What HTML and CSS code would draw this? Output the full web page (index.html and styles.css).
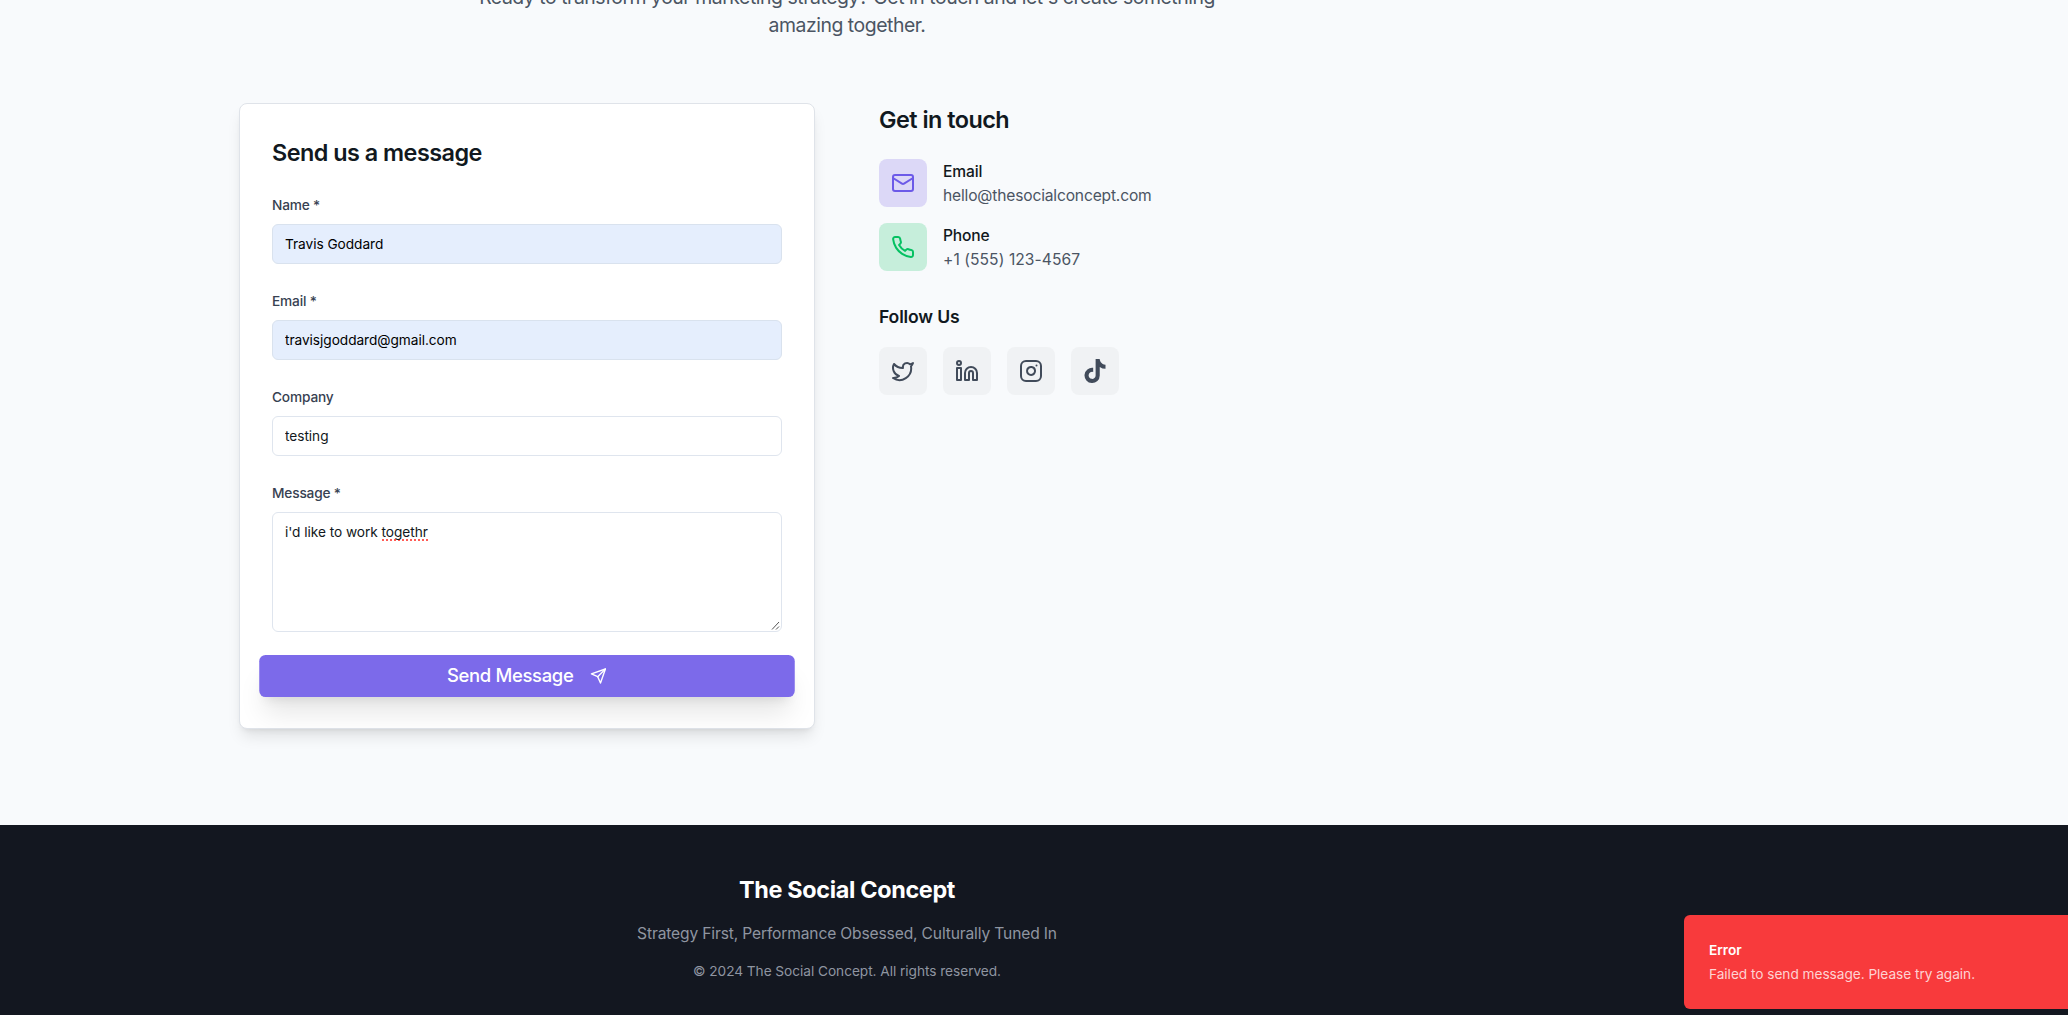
FILE: index.html
```html
<!DOCTYPE html>
<html lang="en">
<head>
<meta charset="utf-8">
<title>The Social Concept</title>
<link rel="stylesheet" href="styles.css">
</head>
<body>
<main class="contact">
  <p class="lead">Ready to transform your marketing strategy? Get in touch and let's create something<br>amazing together.</p>
  <div class="columns">
    <section class="card">
      <h2 class="heading">Send us a message</h2>
      <form class="form">
        <div class="field"><label class="label" for="name">Name *</label><input class="input autofill" id="name" value="Travis Goddard"></div>
        <div class="field"><label class="label" for="email">Email *</label><input class="input autofill" id="email" value="travisjgoddard@gmail.com"></div>
        <div class="field"><label class="label" for="company">Company</label><input class="input" id="company" value="testing"></div>
        <div class="field"><span class="label">Message *</span>
          <div class="input textarea" role="textbox">i'd like to work <span class="misspelled">togethr</span>
            <svg class="grip" viewBox="0 0 9 9"><path d="M1 8.5 8 1M5 8.5 8 5.5"/></svg>
          </div>
        </div>
        <button class="send" type="button"><span>Send Message</span>
          <svg class="icon send-icon" viewBox="0 0 24 24"><path d="m22 2-7 20-4-9-9-4Z"/><path d="M22 2 11 13"/></svg>
        </button>
      </form>
    </section>
    <section>
      <h2 class="heading">Get in touch</h2>
      <div class="methods">
        <div class="method">
          <span class="tile purple"><svg class="icon" viewBox="0 0 24 24"><rect x="2" y="4" width="20" height="16" rx="2"/><path d="m22 7-8.97 5.7a1.94 1.94 0 0 1-2.06 0L2 7"/></svg></span>
          <div class="method-text"><div class="method-name">Email</div><div class="method-value">hello@thesocialconcept.com</div></div>
        </div>
        <div class="method">
          <span class="tile green"><svg class="icon" viewBox="0 0 24 24"><path d="M22 16.92v3a2 2 0 0 1-2.18 2 19.79 19.79 0 0 1-8.63-3.07 19.5 19.5 0 0 1-6-6 19.79 19.79 0 0 1-3.07-8.67A2 2 0 0 1 4.11 2h3a2 2 0 0 1 2 1.72 12.84 12.84 0 0 0 .7 2.81 2 2 0 0 1-.45 2.11L8.09 9.91a16 16 0 0 0 6 6l1.27-1.27a2 2 0 0 1 2.11-.45 12.84 12.84 0 0 0 2.81.7A2 2 0 0 1 22 16.92z"/></svg></span>
          <div class="method-text"><div class="method-name">Phone</div><div class="method-value phone">+1 (555) 123-4567</div></div>
        </div>
      </div>
      <h3 class="follow">Follow Us</h3>
      <div class="socials">
        <a class="tile"><svg class="icon" viewBox="0 0 24 24"><path d="M22 4s-.7 2.1-2 3.4c1.6 10-9.4 17.3-18 11.6 2.2.1 4.4-.6 6-2C3 15.5.5 9.6 3 5c2.2 2.6 5.6 4.1 9 4-.9-4.2 4-6.6 7-3.8 1.1 0 3-1.2 3-1.2z"/></svg></a>
        <a class="tile"><svg class="icon" viewBox="0 0 24 24"><path d="M16 8a6 6 0 0 1 6 6v7h-4v-7a2 2 0 0 0-4 0v7h-4v-7a6 6 0 0 1 6-6z"/><rect x="2" y="9" width="4" height="12"/><circle cx="4" cy="4" r="2"/></svg></a>
        <a class="tile"><svg class="icon" viewBox="0 0 24 24"><rect x="2" y="2" width="20" height="20" rx="5"/><path d="M16 11.37A4 4 0 1 1 12.63 8 4 4 0 0 1 16 11.37z"/><path d="M17.5 6.5h.01"/></svg></a>
        <a class="tile"><svg class="icon solid" viewBox="0 0 448 512"><path d="M448,209.91a210.06,210.06,0,0,1-122.77-39.25V349.38A162.55,162.55,0,1,1,185,188.31V278.2a74.62,74.62,0,1,0,52.23,71.18V0l88,0a121.18,121.18,0,0,0,1.86,22.17h0A122.18,122.18,0,0,0,381,102.39a121.43,121.43,0,0,0,67,20.14Z"/></svg></a>
      </div>
    </section>
  </div>
</main>
<footer class="footer">
  <h2 class="brand">The Social Concept</h2>
  <p class="tagline">Strategy First, Performance Obsessed, Culturally Tuned In</p>
  <p class="copyright">© 2024 The Social Concept. All rights reserved.</p>
</footer>
<div class="toast" role="alert">
  <div class="toast-title">Error</div>
  <div class="toast-text">Failed to send message. Please try again.</div>
</div>
</body>
</html>
```
FILE: styles.css
```css
* { box-sizing: border-box; margin: 0; padding: 0; }
html { height: 100%; overflow: hidden; }
body {
  position: relative;
  height: 1015px;
  overflow: hidden;
  background: #f8fafc;
  color: #111820;
  font: 15.6px/24px Inter, "Liberation Sans", sans-serif;
}
.contact { display: flow-root; width: 1216px; margin-left: 239px; height: 825px; }
.lead {
  margin: -17px 0 64px;
  text-align: center;
  font-size: 19.4px;
  line-height: 28px;
  letter-spacing: -.455px;
  color: #4b5563;
}
.columns { display: grid; grid-template-columns: 1fr 1fr; gap: 64px; align-items: start; }
.card {
  padding: 32px;
  border: 1px solid #dfe3e9;
  border-radius: 8px;
  background: #fff;
  box-shadow: 0 10px 15px -3px rgba(0,0,0,.1), 0 4px 6px -4px rgba(0,0,0,.1);
}
.heading { padding-top: 1px; margin-bottom: 23px; font-size: 23.4px; line-height: 32px; font-weight: 600; letter-spacing: -.52px; }
.form { display: flex; flex-direction: column; gap: 24px; }
.label { display: block; padding-top: 1px; margin-bottom: 7px; font-size: 13.7px; line-height: 24px; font-weight: 470; letter-spacing: -.17px; color: #374151; }
.input {
  display: block;
  width: 100%;
  height: 40px;
  padding: 8px 12px;
  border: 1px solid #dfe5ee;
  border-radius: 6px;
  background: #fff;
  color: #111820;
  font: 13.7px/20px Inter, "Liberation Sans", sans-serif;
  letter-spacing: -.05px;
}
.autofill { background: #e5eefd; border-color: #d9e2ee; color: #000; }
.textarea { position: relative; height: 120px; padding-top: 9px; }
.misspelled {
  padding-bottom: 1px;
  background: repeating-linear-gradient(90deg, #ff5b55 0 2px, transparent 2px 4px) 0 100% / 100% 2px no-repeat;
}
.grip { position: absolute; right: 1px; bottom: 1px; width: 9px; height: 9px; fill: none; stroke: #555; stroke-width: 1; }
.send {
  display: flex;
  align-items: center;
  justify-content: center;
  gap: 16px;
  height: 40px;
  margin: 0;
  border: 0;
  border-radius: 6px;
  background: #7c6aea;
  color: #fff;
  font: 450 17.6px/28px Inter, "Liberation Sans", sans-serif;
  letter-spacing: -.32px;
  transform: scale(1.05);
  box-shadow: 0 20px 25px -5px rgba(0,0,0,.1), 0 8px 10px -6px rgba(0,0,0,.1);
}
.icon { display: block; width: 24px; height: 24px; fill: none; stroke: currentColor; stroke-width: 2; stroke-linecap: round; stroke-linejoin: round; }
.solid { fill: currentColor; stroke: none; }
.send-icon { width: 16px; height: 16px; }
.methods { display: flex; flex-direction: column; gap: 16px; }
.method { display: flex; gap: 16px; height: 48px; }
.tile { display: flex; align-items: center; justify-content: center; width: 48px; height: 48px; border-radius: 8px; background: #f0f2f4; color: #414b5a; }
.purple { background: #dcd8f7; color: #6c5ae8; }
.green { background: #c6eedb; color: #05c162; }
.method-text { padding-top: 1px; }
.method-name { font-weight: 500; letter-spacing: -.15px; }
.method-value { color: #4b5563; letter-spacing: -.17px; }
.phone { letter-spacing: .07px; }
.follow { margin: 32px 0 16px; font-size: 17.6px; line-height: 28px; font-weight: 600; letter-spacing: -.17px; }
.socials { display: flex; gap: 16px; }
.footer { height: 190px; padding: 49px 374px 0 0; background: #131720; text-align: center; color: #8f95a1; }
.brand { margin-bottom: 16px; font-size: 23.4px; line-height: 32px; letter-spacing: -.33px; color: #fff; }
.tagline { margin-bottom: 15px; letter-spacing: -.15px; }
.copyright { font-size: 13.7px; line-height: 20px; letter-spacing: -.05px; }
.toast {
  position: absolute;
  left: 1684px;
  top: 915px;
  width: 400px;
  height: 94px;
  padding: 25px;
  border-radius: 6px;
  background: #f83a3c;
  color: #fff;
  font-size: 13.7px;
  line-height: 20px;
}
.toast-title { margin-bottom: 4px; font-weight: 600; }
.toast-text { letter-spacing: -.045px; color: #fed3d3; }
```
